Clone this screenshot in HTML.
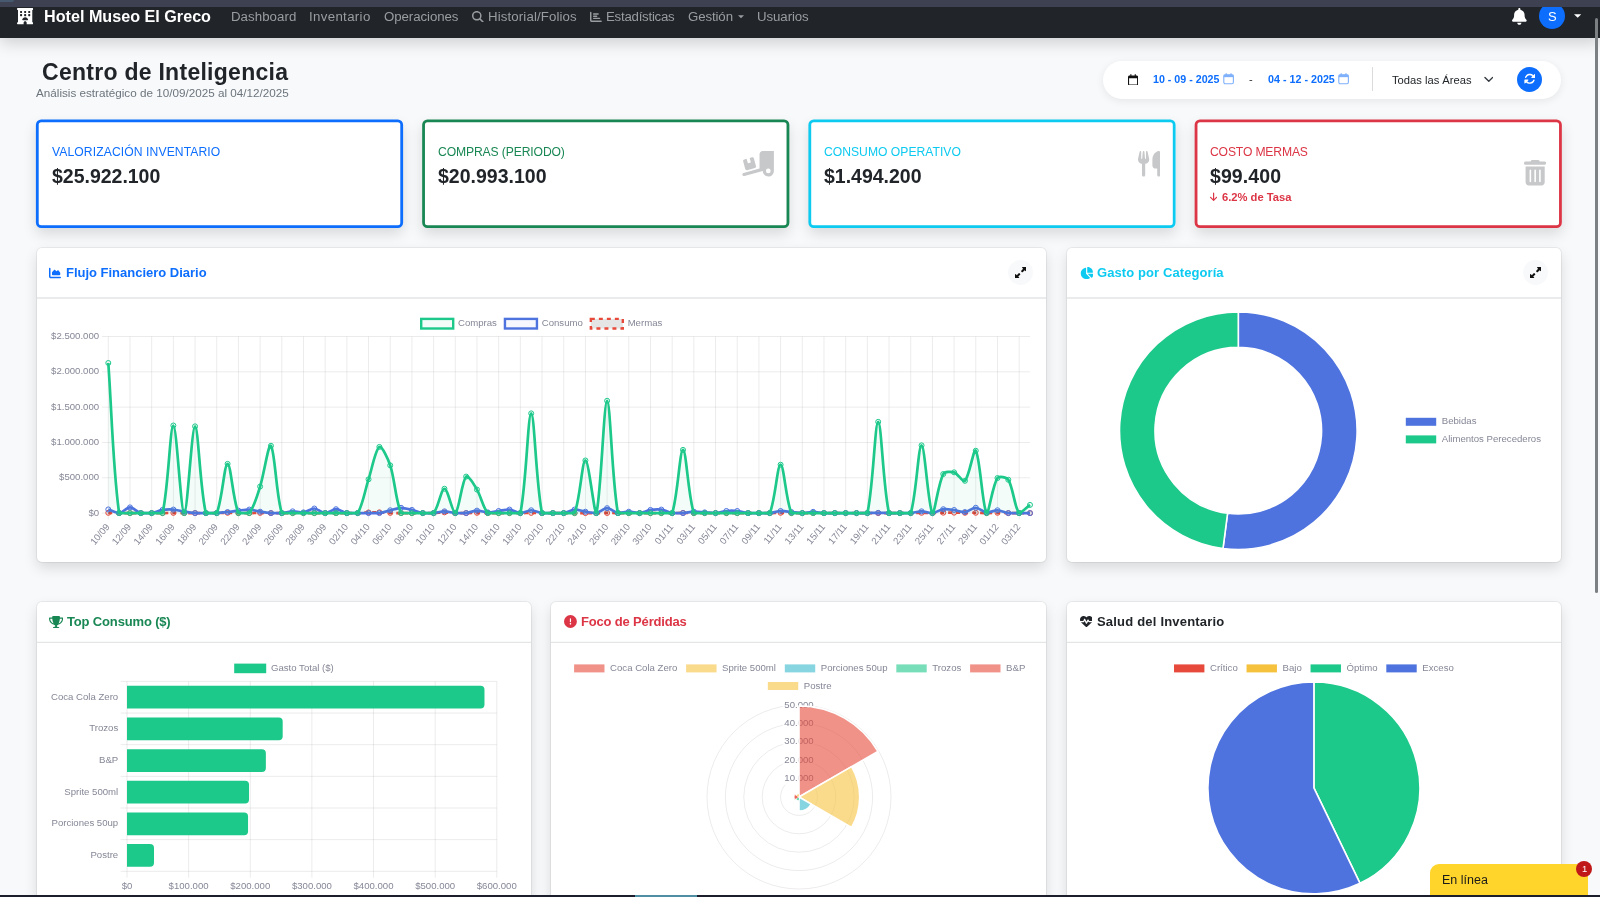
<!DOCTYPE html><html lang="es"><head><meta charset="utf-8"><title>Centro de Inteligencia</title><style>
*{box-sizing:border-box;margin:0;padding:0}
html,body{width:1600px;height:897px;overflow:hidden;background:#f8f9fa;font-family:"Liberation Sans",sans-serif;}
body{position:relative}
#app{position:absolute;left:0;top:0;width:1600px;height:897px;overflow:hidden}
.t{position:absolute;white-space:nowrap;line-height:1;will-change:transform}
.gs{will-change:transform}
.abs{position:absolute}
.nav{position:absolute;left:0;top:0;width:1600px;height:37.6px;background:#212529;box-shadow:0 5px 16px rgba(0,0,0,.17);}
.strip{position:absolute;left:0;top:0;width:1600px;height:6.8px;background:#3d4152;}
.card{position:absolute;background:#fff;border-radius:5px;box-shadow:0 0 0 1px rgba(0,0,0,.055),0 6px 14px rgba(0,0,0,.13);}
.kpi{position:absolute;background:#fff;border-radius:5px;box-shadow:0 6px 14px rgba(0,0,0,.13);top:119.6px;height:108.4px;width:367px;}
.hdr{position:absolute;left:0;right:0;top:0;}
svg text{font-family:"Liberation Sans",sans-serif;font-size:9.6px;fill:#858796;}
.pill{position:absolute;left:1102.5px;top:61px;width:458.5px;height:37.5px;border-radius:19px;background:#fff;box-shadow:0 2px 8px rgba(0,0,0,.08);}
.circ{position:absolute;border-radius:50%;}
</style></head><body><div id="app">
<nav class="nav">
<svg style="position:absolute;left:16.80px;top:8.30px;width:16.30px;height:16.30px;" viewBox="0 0 512 512"><path fill="#fff" d="M0 32C0 14.3 14.3 0 32 0H480c17.7 0 32 14.3 32 32s-14.3 32-32 32V448c17.7 0 32 14.3 32 32s-14.3 32-32 32H304V464c0-26.500-21.500-48-48-48s-48 21.500-48 48v48H32c-17.700 0-32-14.300-32-32s14.300-32 32-32V64C14.300 64 0 49.700 0 32zm96 80v32c0 8.800 7.200 16 16 16h32c8.800 0 16-7.200 16-16V112c0-8.800-7.200-16-16-16H112c-8.800 0-16 7.200-16 16zM240 96c-8.800 0-16 7.200-16 16v32c0 8.800 7.200 16 16 16h32c8.800 0 16-7.200 16-16V112c0-8.800-7.200-16-16-16H240zm112 16v32c0 8.800 7.200 16 16 16h32c8.800 0 16-7.200 16-16V112c0-8.800-7.200-16-16-16H368c-8.800 0-16 7.200-16 16zM112 192c-8.800 0-16 7.200-16 16v32c0 8.800 7.200 16 16 16h32c8.800 0 16-7.200 16-16V208c0-8.800-7.200-16-16-16H112zm112 16v32c0 8.800 7.200 16 16 16h32c8.800 0 16-7.200 16-16V208c0-8.800-7.200-16-16-16H240c-8.800 0-16 7.200-16 16zm144-16c-8.800 0-16 7.200-16 16v32c0 8.800 7.200 16 16 16h32c8.800 0 16-7.200 16-16V208c0-8.800-7.200-16-16-16H368zM328 384c13.300 0 24.300-10.900 21-23.800c-10.600-41.500-48.200-72.200-93-72.200s-82.500 30.700-93 72.200c-3.300 12.800 7.800 23.800 21 23.800H328z"/></svg>
<span class="t" style="left:44.00px;top:8px;font-size:16.16px;font-weight:700;color:#fff;">Hotel Museo El Greco</span>
<span class="t" style="left:230.50px;top:10px;font-size:13.25px;color:#9a9da0;letter-spacing:0.054px;">Dashboard</span>
<span class="t" style="left:309.25px;top:10px;font-size:13.25px;color:#9a9da0;letter-spacing:0.340px;">Inventario</span>
<span class="t" style="left:383.75px;top:10px;font-size:13.25px;color:#9a9da0;letter-spacing:-0.063px;">Operaciones</span>
<span class="t" style="left:488.00px;top:10px;font-size:13.25px;color:#9a9da0;letter-spacing:0.124px;">Historial/Folios</span>
<span class="t" style="left:606.25px;top:10px;font-size:13.25px;color:#9a9da0;letter-spacing:-0.244px;">Estadísticas</span>
<span class="t" style="left:688.25px;top:10px;font-size:13.25px;color:#9a9da0;letter-spacing:-0.111px;">Gestión</span>
<span class="t" style="left:757.00px;top:10px;font-size:13.25px;color:#9a9da0;letter-spacing:-0.076px;">Usuarios</span>
<svg style="position:absolute;left:472.00px;top:10.60px;width:11.80px;height:11.80px;" viewBox="0 0 512 512"><path fill="#9a9da0" d="M416 208c0 45.900-14.900 88.300-40 122.700L502.600 457.400c12.500 12.500 12.500 32.800 0 45.300s-32.800 12.500-45.300 0L330.700 376c-34.400 25.200-76.800 40-122.700 40C93.100 416 0 322.900 0 208S93.100 0 208 0S416 93.100 416 208zM208 352a144 144 0 1 0 0-288 144 144 0 1 0 0 288z"/></svg>
<svg style="position:absolute;left:589.80px;top:10.60px;width:11.80px;height:11.80px;" viewBox="0 0 512 512"><path fill="#9a9da0" d="M32 32c17.700 0 32 14.300 32 32V400c0 8.800 7.200 16 16 16H480c17.700 0 32 14.300 32 32s-14.300 32-32 32H80c-44.200 0-80-35.800-80-80V64C0 46.300 14.300 32 32 32zm96 96c0-17.700 14.300-32 32-32l192 0c17.700 0 32 14.300 32 32s-14.300 32-32 32l-192 0c-17.700 0-32-14.300-32-32zm32 64H288c17.700 0 32 14.300 32 32s-14.300 32-32 32H160c-17.700 0-32-14.300-32-32s14.300-32 32-32zm0 96H416c17.700 0 32 14.300 32 32s-14.300 32-32 32H160c-17.700 0-32-14.300-32-32s14.300-32 32-32z"/></svg>
<svg class="abs" style="left:738px;top:15.2px;width:6px;height:3.4px" viewBox="0 0 10 5"><path d="M0 0h10L5 5z" fill="#9a9da0"/></svg>
<svg style="position:absolute;left:1512.30px;top:8.10px;width:14.70px;height:16.80px;" viewBox="0 0 448 512"><path fill="#fff" d="M224 0c-17.700 0-32 14.300-32 32V51.200C119 66 64 130.600 64 208v18.800c0 47-17.300 92.400-48.500 127.600l-7.400 8.300c-8.400 9.400-10.400 22.900-5.300 34.400S19.400 416 32 416H416c12.600 0 24-7.400 29.200-18.900s3.100-25-5.300-34.400l-7.400-8.300C401.300 319.200 384 273.900 384 226.800V208c0-77.400-55-142-128-156.800V32c0-17.700-14.300-32-32-32zm45.300 493.300c12-12 18.700-28.300 18.700-45.300H224 160c0 17 6.700 33.300 18.700 45.300s28.300 18.700 45.300 18.700s33.300-6.700 45.300-18.700z"/></svg>
<div class="circ" style="left:1538.8px;top:3.1px;width:26.2px;height:26.2px;background:#0d6efd"></div>
<span class="t" style="left:1547.60px;top:10px;font-size:13px;color:#fff;">S</span>
<svg class="abs" style="left:1574px;top:14px;width:7.4px;height:4px" viewBox="0 0 10 5"><path d="M0 0h10L5 5z" fill="#fff"/></svg>
</nav>
<div class="strip"></div>
<div class="abs" style="left:-4px;top:-2px;width:18px;height:4px;border-radius:2px;background:#46596f"></div>
<span class="t" style="left:42.00px;top:61px;font-size:23px;font-weight:700;color:#212529;letter-spacing:0.273px;">Centro de Inteligencia</span>
<span class="t" style="left:36.00px;top:87px;font-size:11.7px;color:#6c757d;">Análisis estratégico de 10/09/2025 al 04/12/2025</span>
<div class="pill"></div>
<svg style="position:absolute;left:1128.00px;top:73.60px;width:10.15px;height:11.60px;" viewBox="0 0 448 512"><path fill="#111" d="M152 24c0-13.300-10.700-24-24-24s-24 10.700-24 24V64H64C28.700 64 0 92.700 0 128v16 48V448c0 35.300 28.700 64 64 64H384c35.300 0 64-28.700 64-64V192 144 128c0-35.300-28.700-64-64-64H344V24c0-13.300-10.700-24-24-24s-24 10.700-24 24V64H152V24zM48 192H400V448c0 8.800-7.200 16-16 16H64c-8.800 0-16-7.200-16-16V192z"/></svg>
<span class="t" style="left:1152.50px;top:74px;font-size:10.68px;font-weight:700;color:#0d6efd;">10 - 09 - 2025</span>
<span class="t" style="left:1267.50px;top:74px;font-size:10.74px;font-weight:700;color:#0d6efd;">04 - 12 - 2025</span>
<span class="t" style="left:1249.30px;top:74px;font-size:11px;color:#333;">-</span>
<svg class="abs" style="left:1223.3px;top:73.2px;width:11.2px;height:11.6px" viewBox="0 0 14 14.5"><rect x="1" y="2.2" width="12" height="11.3" rx="1.8" fill="none" stroke="#7fb0fb" stroke-width="1.4"/><rect x="1" y="2.2" width="12" height="3" fill="#7fb0fb"/><path d="M4 0.3v3M10 0.3v3" stroke="#7fb0fb" stroke-width="1.5"/></svg>
<svg class="abs" style="left:1338.3px;top:73.2px;width:11.2px;height:11.6px" viewBox="0 0 14 14.5"><rect x="1" y="2.2" width="12" height="11.3" rx="1.8" fill="none" stroke="#7fb0fb" stroke-width="1.4"/><rect x="1" y="2.2" width="12" height="3" fill="#7fb0fb"/><path d="M4 0.3v3M10 0.3v3" stroke="#7fb0fb" stroke-width="1.5"/></svg>
<div class="abs" style="left:1372px;top:67.2px;width:1px;height:23.4px;background:#d9dbdd"></div>
<span class="t" style="left:1391.60px;top:75px;font-size:11.19px;color:#212529;">Todas las Áreas</span>
<svg class="abs" style="left:1483.6px;top:75.6px;width:9.6px;height:7px" viewBox="0 0 12 8"><path d="M1.2 1.5l4.8 4.8 4.8-4.8" fill="none" stroke="#343a40" stroke-width="1.7" stroke-linecap="round" stroke-linejoin="round"/></svg>
<div class="circ" style="left:1517.2px;top:66.6px;width:25px;height:25px;background:#0d6efd"></div>
<svg style="position:absolute;left:1523.90px;top:73.30px;width:11.60px;height:11.60px;" viewBox="0 0 512 512"><path fill="#fff" d="M142.900 142.900c62.200-62.200 162.700-62.500 225.300-1L327 183c-6.900 6.900-8.900 17.200-5.200 26.200s12.500 14.800 22.200 14.800H463.500c0 0 0 0 0 0H472c13.300 0 24-10.700 24-24V72c0-9.700-5.800-18.500-14.800-22.200s-19.300-1.700-26.200 5.200L413.400 96.600c-87.600-86.500-228.700-86.200-315.800 1C73.200 122 55.600 150.700 44.800 181.400c-5.900 16.700 2.900 34.900 19.500 40.800s34.900-2.900 40.800-19.500c7.700-21.800 20.200-42.300 37.800-59.800zM16 312v7.600 .7V440c0 9.700 5.800 18.500 14.800 22.200s19.300 1.700 26.200-5.200l41.600-41.600c87.600 86.500 228.700 86.200 315.800-1c24.400-24.400 42.100-53.100 52.900-83.700c5.900-16.700-2.900-34.900-19.500-40.800s-34.900 2.900-40.800 19.500c-7.700 21.800-20.200 42.300-37.800 59.800c-62.200 62.200-162.700 62.500-225.300 1L185 329c6.900-6.900 8.900-17.200 5.200-26.200s-12.500-14.800-22.200-14.800H48.400h-.7H40c-13.300 0-24 10.700-24 24z"/></svg>
<div class="kpi" style="left:36px"></div>
<span class="t" style="left:51.70px;top:146px;font-size:12.15px;color:#0d6efd;letter-spacing:0.096px;">VALORIZACIÓN INVENTARIO</span>
<span class="t" style="left:51.70px;top:167px;font-size:19.5px;font-weight:700;color:#212529;letter-spacing:-0.014px;">$25.922.100</span>
<div class="kpi" style="left:422.25px"></div>
<span class="t" style="left:437.95px;top:146px;font-size:12.15px;color:#198754;letter-spacing:-0.121px;">COMPRAS (PERIODO)</span>
<span class="t" style="left:437.95px;top:167px;font-size:19.5px;font-weight:700;color:#212529;letter-spacing:0.006px;">$20.993.100</span>
<div class="kpi" style="left:808.5px"></div>
<span class="t" style="left:824.20px;top:146px;font-size:12.15px;color:#0dcaf0;letter-spacing:0.012px;">CONSUMO OPERATIVO</span>
<span class="t" style="left:824.20px;top:167px;font-size:19.5px;font-weight:700;color:#212529;letter-spacing:-0.011px;">$1.494.200</span>
<div class="kpi" style="left:1194.75px"></div>
<span class="t" style="left:1210.45px;top:146px;font-size:12.15px;color:#dc3545;letter-spacing:-0.153px;">COSTO MERMAS</span>
<span class="t" style="left:1210.45px;top:167px;font-size:19.5px;font-weight:700;color:#212529;letter-spacing:0.085px;">$99.400</span>
<svg style="position:absolute;left:742.20px;top:151.10px;width:31.88px;height:25.50px;" viewBox="0 0 640 512"><path fill="#c7c8ca" d="M640 0V400c0 61.900-50.100 112-112 112c-61 0-110.500-48.700-112-109.300L48.400 502.900c-17.100 4.600-34.600-5.400-39.300-22.500s5.400-34.600 22.500-39.300L352 353.800V64c0-35.300 28.700-64 64-64H640zM576 400a48 48 0 1 0 -96 0 48 48 0 1 0 96 0zM23.100 207.700c-4.600-17.100 5.600-34.600 22.600-39.200l46.400-12.400 20.700 77.300c2.300 8.500 11.100 13.600 19.600 11.300l30.900-8.300c8.500-2.300 13.600-11.100 11.300-19.600l-20.700-77.300 46.400-12.400c17.100-4.600 34.600 5.600 39.200 22.600l41.400 154.500c4.600 17.100-5.600 34.600-22.600 39.200L103.700 384.900c-17.100 4.600-34.600-5.600-39.200-22.600L23.100 207.700z"/></svg>
<svg style="position:absolute;left:1137.70px;top:151.10px;width:22.40px;height:25.60px;" viewBox="0 0 448 512"><path fill="#c7c8ca" d="M416 0C400 0 288 32 288 176V288c0 35.300 28.700 64 64 64h32V480c0 17.700 14.300 32 32 32s32-14.300 32-32V352 240 32c0-17.700-14.300-32-32-32zM64 16C64 7.800 57.900 1 49.700 .1S34.200 4.600 32.400 12.500L2.100 148.800C.7 155.100 0 161.500 0 167.900c0 45.900 35.100 83.600 80 87.700V480c0 17.700 14.300 32 32 32s32-14.300 32-32V255.600c44.900-4.100 80-41.800 80-87.700c0-6.400-.7-12.800-2.100-19.100L191.600 12.500c-1.800-8-9.300-13.300-17.400-12.400S160 7.800 160 16V150.200c0 5.400-4.400 9.800-9.800 9.800c-5.100 0-9.300-3.900-9.800-9L127.900 14.600C127.200 6.300 120.300 0 112 0s-15.200 6.300-15.900 14.600L83.700 151c-.5 5.100-4.700 9-9.800 9c-5.400 0-9.800-4.400-9.800-9.800V16z"/></svg>
<svg style="position:absolute;left:1523.80px;top:160.30px;width:22.31px;height:25.50px;" viewBox="0 0 448 512"><path fill="#c7c8ca" d="M135.200 17.700C140.600 6.800 151.700 0 163.800 0H284.200c12.100 0 23.200 6.800 28.600 17.700L320 32h96c17.700 0 32 14.300 32 32s-14.300 32-32 32H32C14.300 96 0 81.700 0 64S14.300 32 32 32h96l7.200-14.300zM32 128H416V448c0 35.300-28.700 64-64 64H96c-35.300 0-64-28.700-64-64V128zm96 64c-8.800 0-16 7.200-16 16V432c0 8.800 7.200 16 16 16s16-7.200 16-16V208c0-8.800-7.200-16-16-16zm96 0c-8.800 0-16 7.200-16 16V432c0 8.800 7.200 16 16 16s16-7.200 16-16V208c0-8.800-7.200-16-16-16zm96 0c-8.800 0-16 7.200-16 16V432c0 8.800 7.200 16 16 16s16-7.200 16-16V208c0-8.800-7.200-16-16-16z"/></svg>
<svg style="position:absolute;left:1210.30px;top:192.20px;width:7.20px;height:9.60px;" viewBox="0 0 384 512"><path fill="#dc3545" d="M169.400 470.600c12.500 12.500 32.800 12.500 45.300 0l160-160c12.500-12.500 12.500-32.800 0-45.300s-32.800-12.500-45.300 0L224 370.800 224 64c0-17.700-14.300-32-32-32s-32 14.300-32 32l0 306.700L54.600 265.400c-12.500-12.500-32.800-12.500-45.300 0s-12.500 32.800 0 45.300l160 160z"/></svg>
<span class="t" style="left:1221.50px;top:192px;font-size:11.2px;font-weight:700;color:#dc3545;">6.2% de Tasa</span>
<div class="card" style="left:37px;top:248px;width:1009px;height:314px"><div class="hdr" style="height:50px"></div></div>
<div class="card" style="left:1067px;top:248px;width:494px;height:314px"><div class="hdr" style="height:50px"></div></div>
<div class="card" style="left:37px;top:602px;width:494px;height:320px"><div class="hdr" style="height:41px"></div></div>
<div class="card" style="left:551px;top:602px;width:495px;height:320px"><div class="hdr" style="height:41px"></div></div>
<div class="card" style="left:1067px;top:602px;width:494px;height:320px"><div class="hdr" style="height:41px"></div></div>
<svg style="position:absolute;left:49.10px;top:267.00px;width:12.00px;height:12.00px;" viewBox="0 0 512 512"><path fill="#0d6efd" d="M64 64c0-17.700-14.300-32-32-32S0 46.300 0 64V400c0 44.200 35.800 80 80 80H480c17.700 0 32-14.300 32-32s-14.300-32-32-32H80c-8.800 0-16-7.200-16-16V64zm96 288H448c17.700 0 32-14.300 32-32V251.800c0-7.600-2.700-15-7.700-20.800l-65.800-76.800c-12.100-14.200-33.700-15-46.900-1.800l-21 21c-10 10-26.400 9.200-35.400-1.600l-39.200-47c-12.600-15.100-35.700-15.400-48.700-.6L135.900 215c-5.100 5.800-7.900 13.300-7.900 21.100v84c0 17.700 14.300 32 32 32z"/></svg>
<span class="t" style="left:66.00px;top:266px;font-size:13px;font-weight:700;color:#0d6efd;letter-spacing:-0.011px;">Flujo Financiero Diario</span>
<svg style="position:absolute;left:1079.70px;top:266.80px;width:13.72px;height:12.20px;" viewBox="0 0 576 512"><path fill="#0dcaf0" d="M304 240V16.600c0-9 7-16.600 16-16.600C443.700 0 544 100.300 544 224c0 9-7.600 16-16.600 16H304zM32 272C32 150.700 122.100 50.300 239 34.300c9.200-1.300 17 6.100 17 15.400V288L412.500 444.500c6.700 6.700 6.200 17.700-1.500 23.100C371.800 495.600 323.800 512 272 512C139.500 512 32 404.600 32 272zm526.400 16c9.300 0 16.600 7.800 15.400 17c-7.700 55.900-34.600 105.600-73.900 142.300c-6 5.600-15.400 5.200-21.200-.7L320 288H558.400z"/></svg>
<span class="t" style="left:1097.10px;top:266px;font-size:13px;font-weight:700;color:#0dcaf0;letter-spacing:0.091px;">Gasto por Categoría</span>
<svg style="position:absolute;left:49.10px;top:615.60px;width:14.17px;height:12.60px;" viewBox="0 0 576 512"><path fill="#198754" d="M400 0H176c-26.500 0-48.100 21.800-47.100 48.200c.2 5.300 .4 10.600 .7 15.800H24C10.700 64 0 74.700 0 88c0 92.600 33.500 157 78.500 200.700c44.300 43.100 98.300 64.800 138.100 75.800c23.400 6.500 39.400 26 39.400 45.600c0 20.900-17 37.900-37.900 37.900H192c-17.700 0-32 14.300-32 32s14.300 32 32 32H384c17.700 0 32-14.300 32-32s-14.300-32-32-32H357.900C337 448 320 431 320 410.100c0-19.600 15.900-39.200 39.400-45.600c39.900-11 93.900-32.700 138.200-75.800C542.500 245 576 180.600 576 88c0-13.300-10.700-24-24-24H446.400c.3-5.200 .5-10.400 .7-15.800C448.100 21.800 426.500 0 400 0zM48.900 112h84.400c9.100 90.100 29.200 150.300 51.900 190.600c-24.900-11-50.800-26.500-73.200-48.300c-32-31.100-58-76-63-142.300zM464.100 254.300c-22.400 21.800-48.300 37.300-73.200 48.300c22.700-40.300 42.800-100.500 51.900-190.600h84.400c-5.100 66.300-31.100 111.200-63 142.300z"/></svg>
<span class="t" style="left:67.20px;top:615px;font-size:13px;font-weight:700;color:#198754;letter-spacing:-0.158px;">Top Consumo ($)</span>
<svg style="position:absolute;left:564.00px;top:615.40px;width:12.90px;height:12.90px;" viewBox="0 0 512 512"><path fill="#dc3545" d="M256 512A256 256 0 1 0 256 0a256 256 0 1 0 0 512zm0-384c13.300 0 24 10.700 24 24V264c0 13.300-10.700 24-24 24s-24-10.700-24-24V152c0-13.300 10.700-24 24-24zM224 352a32 32 0 1 1 64 0 32 32 0 1 1 -64 0z"/></svg>
<span class="t" style="left:580.70px;top:615px;font-size:13px;font-weight:700;color:#dc3545;letter-spacing:-0.171px;">Foco de Pérdidas</span>
<svg style="position:absolute;left:1079.50px;top:615.40px;width:12.90px;height:12.90px;" viewBox="0 0 512 512"><path fill="#212529" d="M228.300 469.100L47.600 300.400c-4.200-3.900-8.200-8.100-11.900-12.400h87c22.600 0 43-13.600 51.700-34.500l10.500-25.200 49.300 109.500c3.800 8.500 12.100 14 21.400 14.100s17.800-5 22-13.300L320 253.700l1.700 3.400c9.500 19 28.900 31 50.100 31H476.300c-3.700 4.300-7.700 8.500-11.900 12.400L283.700 469.100c-7.500 7-17.400 10.900-27.700 10.900s-20.200-3.900-27.700-10.900zM503.700 240h-132c-3 0-5.800-1.700-7.200-4.400l-23.200-46.300c-4.100-8.100-12.400-13.300-21.500-13.300s-17.400 5.100-21.500 13.300l-41.400 82.800L205.900 158.200c-3.900-8.700-12.700-14.300-22.200-14.100s-18.100 5.900-21.800 14.800l-31.800 76.300c-1.200 3-4.200 4.900-7.400 4.900H16c-2.600 0-5 .4-7.300 1.100C3 225.200 0 208.200 0 190.900v-5.800c0-69.900 50.500-129.500 119.400-141C165 36.500 211.400 51.400 244 84l12 12 12-12c32.600-32.600 79-47.500 124.600-39.900C461.500 55.600 512 115.200 512 185.100v5.800c0 16.900-2.800 33.500-8.300 49.100z"/></svg>
<span class="t" style="left:1097.00px;top:615px;font-size:13px;font-weight:700;color:#212529;letter-spacing:0.199px;">Salud del Inventario</span>
<div class="circ" style="left:1008.3px;top:260.0px;width:25px;height:25px;background:#f8f9fa"></div>
<svg style="position:absolute;left:1015.10px;top:266.80px;width:11.40px;height:11.40px;" viewBox="0 0 512 512"><path fill="#111" d="M344 0H488c13.300 0 24 10.700 24 24V168c0 9.700-5.800 18.500-14.800 22.200s-19.300 1.700-26.200-5.200l-39-39-87 87c-9.400 9.400-24.600 9.400-33.900 0l-32-32c-9.400-9.400-9.400-24.600 0-33.900l87-87L327 41c-6.900-6.900-8.900-17.200-5.200-26.200S334.300 0 344 0zM168 512H24c-13.300 0-24-10.700-24-24V344c0-9.700 5.800-18.500 14.800-22.200s19.300-1.700 26.200 5.200l39 39 87-87c9.400-9.400 24.600-9.400 33.900 0l32 32c9.400 9.400 9.400 24.600 0 33.900l-87 87 39 39c6.900 6.900 8.900 17.200 5.200 26.200s-12.500 14.800-22.200 14.800z"/></svg>
<div class="circ" style="left:1523.1px;top:260.0px;width:25px;height:25px;background:#f8f9fa"></div>
<svg style="position:absolute;left:1529.90px;top:266.80px;width:11.40px;height:11.40px;" viewBox="0 0 512 512"><path fill="#111" d="M344 0H488c13.300 0 24 10.700 24 24V168c0 9.700-5.800 18.500-14.800 22.200s-19.300 1.700-26.200-5.200l-39-39-87 87c-9.400 9.400-24.600 9.400-33.900 0l-32-32c-9.400-9.400-9.400-24.600 0-33.900l87-87L327 41c-6.900-6.900-8.900-17.200-5.200-26.200S334.300 0 344 0zM168 512H24c-13.300 0-24-10.700-24-24V344c0-9.700 5.800-18.500 14.800-22.200s19.300-1.700 26.200 5.200l39 39 87-87c9.400-9.400 24.600-9.400 33.900 0l32 32c9.400 9.400 9.400 24.600 0 33.900l-87 87 39 39c6.900 6.900 8.900 17.200 5.200 26.200s-12.500 14.800-22.200 14.800z"/></svg>
<svg class="abs gs" style="left:0;top:0" width="1600" height="897" viewBox="0 0 1600 897">
<defs><clipPath id="lcclip"><rect x="104" y="332" width="931" height="186"/></clipPath></defs>
<rect x="37.30" y="120.90" width="364.40" height="105.80" rx="3.9" fill="none" stroke="#0d6efd" stroke-width="2.8"/><rect x="423.55" y="120.90" width="364.40" height="105.80" rx="3.9" fill="none" stroke="#198754" stroke-width="2.8"/><rect x="809.80" y="120.90" width="364.40" height="105.80" rx="3.9" fill="none" stroke="#0dcaf0" stroke-width="2.8"/><rect x="1196.05" y="120.90" width="364.40" height="105.80" rx="3.9" fill="none" stroke="#dc3545" stroke-width="2.8"/>
<path d="M37 298H1046M1067 298H1561M37 642.4H531M551 642.4H1046M1067 642.4H1561" stroke="#e4e5e6" stroke-width="1.3" fill="none"/>
<path d="M101.9 336.5H1030M101.9 371.82H1030M101.9 407.14H1030M101.9 442.46H1030M101.9 477.78H1030M101.9 513.1H1030M108.3 336.5V519.5M129.99 336.5V519.5M151.67 336.5V519.5M173.36 336.5V519.5M195.05 336.5V519.5M216.74 336.5V519.5M238.42 336.5V519.5M260.11 336.5V519.5M281.8 336.5V519.5M303.48 336.5V519.5M325.17 336.5V519.5M346.86 336.5V519.5M368.54 336.5V519.5M390.23 336.5V519.5M411.92 336.5V519.5M433.61 336.5V519.5M455.29 336.5V519.5M476.98 336.5V519.5M498.67 336.5V519.5M520.35 336.5V519.5M542.04 336.5V519.5M563.73 336.5V519.5M585.42 336.5V519.5M607.1 336.5V519.5M628.79 336.5V519.5M650.48 336.5V519.5M672.16 336.5V519.5M693.85 336.5V519.5M715.54 336.5V519.5M737.22 336.5V519.5M758.91 336.5V519.5M780.6 336.5V519.5M802.29 336.5V519.5M823.97 336.5V519.5M845.66 336.5V519.5M867.35 336.5V519.5M889.03 336.5V519.5M910.72 336.5V519.5M932.41 336.5V519.5M954.1 336.5V519.5M975.78 336.5V519.5M997.47 336.5V519.5M1019.16 336.5V519.5" stroke="rgba(0,0,0,0.1)" stroke-width="0.8" fill="none"/>
<text x="99.1" y="515.5" text-anchor="end">$0</text>
<text x="99.1" y="480.18" text-anchor="end">$500.000</text>
<text x="99.1" y="444.86" text-anchor="end">$1.000.000</text>
<text x="99.1" y="409.54" text-anchor="end">$1.500.000</text>
<text x="99.1" y="374.22" text-anchor="end">$2.000.000</text>
<text x="99.1" y="338.9" text-anchor="end">$2.500.000</text>
<text transform="translate(103.89 521.9) rotate(-50)" text-anchor="end" x="0" y="8.1">10/09</text>
<text transform="translate(125.58 521.9) rotate(-50)" text-anchor="end" x="0" y="8.1">12/09</text>
<text transform="translate(147.26 521.9) rotate(-50)" text-anchor="end" x="0" y="8.1">14/09</text>
<text transform="translate(168.95 521.9) rotate(-50)" text-anchor="end" x="0" y="8.1">16/09</text>
<text transform="translate(190.64 521.9) rotate(-50)" text-anchor="end" x="0" y="8.1">18/09</text>
<text transform="translate(212.33 521.9) rotate(-50)" text-anchor="end" x="0" y="8.1">20/09</text>
<text transform="translate(234.01 521.9) rotate(-50)" text-anchor="end" x="0" y="8.1">22/09</text>
<text transform="translate(255.7 521.9) rotate(-50)" text-anchor="end" x="0" y="8.1">24/09</text>
<text transform="translate(277.39 521.9) rotate(-50)" text-anchor="end" x="0" y="8.1">26/09</text>
<text transform="translate(299.07 521.9) rotate(-50)" text-anchor="end" x="0" y="8.1">28/09</text>
<text transform="translate(320.76 521.9) rotate(-50)" text-anchor="end" x="0" y="8.1">30/09</text>
<text transform="translate(342.45 521.9) rotate(-50)" text-anchor="end" x="0" y="8.1">02/10</text>
<text transform="translate(364.13 521.9) rotate(-50)" text-anchor="end" x="0" y="8.1">04/10</text>
<text transform="translate(385.82 521.9) rotate(-50)" text-anchor="end" x="0" y="8.1">06/10</text>
<text transform="translate(407.51 521.9) rotate(-50)" text-anchor="end" x="0" y="8.1">08/10</text>
<text transform="translate(429.2 521.9) rotate(-50)" text-anchor="end" x="0" y="8.1">10/10</text>
<text transform="translate(450.88 521.9) rotate(-50)" text-anchor="end" x="0" y="8.1">12/10</text>
<text transform="translate(472.57 521.9) rotate(-50)" text-anchor="end" x="0" y="8.1">14/10</text>
<text transform="translate(494.26 521.9) rotate(-50)" text-anchor="end" x="0" y="8.1">16/10</text>
<text transform="translate(515.94 521.9) rotate(-50)" text-anchor="end" x="0" y="8.1">18/10</text>
<text transform="translate(537.63 521.9) rotate(-50)" text-anchor="end" x="0" y="8.1">20/10</text>
<text transform="translate(559.32 521.9) rotate(-50)" text-anchor="end" x="0" y="8.1">22/10</text>
<text transform="translate(581.01 521.9) rotate(-50)" text-anchor="end" x="0" y="8.1">24/10</text>
<text transform="translate(602.69 521.9) rotate(-50)" text-anchor="end" x="0" y="8.1">26/10</text>
<text transform="translate(624.38 521.9) rotate(-50)" text-anchor="end" x="0" y="8.1">28/10</text>
<text transform="translate(646.07 521.9) rotate(-50)" text-anchor="end" x="0" y="8.1">30/10</text>
<text transform="translate(667.75 521.9) rotate(-50)" text-anchor="end" x="0" y="8.1">01/11</text>
<text transform="translate(689.44 521.9) rotate(-50)" text-anchor="end" x="0" y="8.1">03/11</text>
<text transform="translate(711.13 521.9) rotate(-50)" text-anchor="end" x="0" y="8.1">05/11</text>
<text transform="translate(732.81 521.9) rotate(-50)" text-anchor="end" x="0" y="8.1">07/11</text>
<text transform="translate(754.5 521.9) rotate(-50)" text-anchor="end" x="0" y="8.1">09/11</text>
<text transform="translate(776.19 521.9) rotate(-50)" text-anchor="end" x="0" y="8.1">11/11</text>
<text transform="translate(797.88 521.9) rotate(-50)" text-anchor="end" x="0" y="8.1">13/11</text>
<text transform="translate(819.56 521.9) rotate(-50)" text-anchor="end" x="0" y="8.1">15/11</text>
<text transform="translate(841.25 521.9) rotate(-50)" text-anchor="end" x="0" y="8.1">17/11</text>
<text transform="translate(862.94 521.9) rotate(-50)" text-anchor="end" x="0" y="8.1">19/11</text>
<text transform="translate(884.62 521.9) rotate(-50)" text-anchor="end" x="0" y="8.1">21/11</text>
<text transform="translate(906.31 521.9) rotate(-50)" text-anchor="end" x="0" y="8.1">23/11</text>
<text transform="translate(928 521.9) rotate(-50)" text-anchor="end" x="0" y="8.1">25/11</text>
<text transform="translate(949.69 521.9) rotate(-50)" text-anchor="end" x="0" y="8.1">27/11</text>
<text transform="translate(971.37 521.9) rotate(-50)" text-anchor="end" x="0" y="8.1">29/11</text>
<text transform="translate(993.06 521.9) rotate(-50)" text-anchor="end" x="0" y="8.1">01/12</text>
<text transform="translate(1014.75 521.9) rotate(-50)" text-anchor="end" x="0" y="8.1">03/12</text>
<g clip-path="url(#lcclip)">
<path d="M108.3 512.82C111.55 512.9 115.89 513.06 119.14 513.1C122.4 513.1 126.73 513.1 129.99 513.1C133.24 513.1 137.58 513.1 140.83 513.1C144.08 513.1 148.42 513.1 151.67 513.1C154.93 513.1 159.26 513.1 162.52 513.1C165.77 513.07 170.11 512.89 173.36 512.89C176.61 512.89 180.95 513.07 184.2 513.1C187.46 513.1 191.8 513.1 195.05 513.1C198.3 513.1 202.64 513.1 205.89 513.1C209.14 513.1 213.48 513.1 216.74 513.1C219.99 513.06 224.33 512.82 227.58 512.82C230.83 512.82 235.17 513.06 238.42 513.1C241.67 513.1 246.01 513.1 249.27 513.1C252.52 513.07 256.86 512.89 260.11 512.89C263.36 512.89 267.7 513.07 270.95 513.1C274.21 513.1 278.54 513.1 281.8 513.1C285.05 513.1 289.39 513.1 292.64 513.1C295.89 513.1 300.23 513.1 303.48 513.1C306.74 513.1 311.07 513.1 314.33 513.1C317.58 513.1 321.92 513.1 325.17 513.1C328.42 513.1 332.76 513.1 336.01 513.1C339.27 513.1 343.6 513.1 346.86 513.1C350.11 513.1 354.45 513.1 357.7 513.1C360.96 513 365.29 512.58 368.54 512.46C371.8 512.35 376.14 512.26 379.39 512.32C382.64 512.39 386.98 512.77 390.23 512.89C393.48 513 397.82 513.07 401.08 513.1C404.33 513.1 408.67 513.1 411.92 513.1C415.17 513.1 419.51 513.1 422.76 513.1C426.02 513.1 430.36 513.1 433.61 513.1C436.86 512.99 441.2 512.39 444.45 512.39C447.7 512.39 452.04 512.99 455.29 513.1C458.54 513.1 462.88 513.1 466.14 513.1C469.39 513.06 473.73 512.82 476.98 512.82C480.23 512.82 484.57 513.06 487.82 513.1C491.08 513.1 495.41 513.1 498.67 513.1C501.92 513.1 506.26 513.1 509.51 513.1C512.76 513.1 517.1 513.1 520.35 513.1C523.61 513.07 527.94 512.89 531.2 512.89C534.45 512.89 538.79 513.07 542.04 513.1C545.29 513.1 549.63 513.1 552.88 513.1C556.14 513.1 560.48 513.1 563.73 513.1C566.98 513.1 571.32 513.1 574.57 513.1C577.82 513.1 582.16 513.1 585.42 513.1C588.67 513.1 593.01 513.1 596.26 513.1C599.51 513.08 603.85 512.96 607.1 512.96C610.36 512.96 614.69 513.08 617.95 513.1C621.2 513.1 625.54 513.1 628.79 513.1C632.04 513.1 636.38 513.1 639.63 513.1C642.89 513.1 647.22 513.1 650.48 513.1C653.73 513.1 658.07 513.1 661.32 513.1C664.57 513.1 668.91 513.1 672.16 513.1C675.42 513.07 679.75 512.89 683.01 512.89C686.26 512.89 690.6 513.07 693.85 513.1C697.1 513.1 701.44 513.1 704.69 513.1C707.95 513.1 712.28 513.1 715.54 513.1C718.79 513.1 723.13 513.1 726.38 513.1C729.63 513.1 733.97 513.1 737.22 513.1C740.48 513.1 744.82 513.1 748.07 513.1C751.32 513.1 755.66 513.1 758.91 513.1C762.16 513.1 766.5 513.1 769.76 513.1C773.01 513.06 777.35 512.82 780.6 512.82C783.85 512.82 788.19 513.06 791.44 513.1C794.69 513.1 799.03 513.1 802.29 513.1C805.54 513.1 809.88 513.1 813.13 513.1C816.38 513.1 820.72 513.1 823.97 513.1C827.23 513.1 831.56 513.1 834.82 513.1C838.07 513.1 842.41 513.1 845.66 513.1C848.91 513.1 853.25 513.1 856.5 513.1C859.76 513.1 864.09 513.1 867.35 513.1C870.6 513.1 874.94 513.1 878.19 513.1C881.44 513.1 885.78 513.1 889.03 513.1C892.29 513.1 896.62 513.1 899.88 513.1C903.13 513.1 907.47 513.1 910.72 513.1C913.97 513.06 918.31 512.82 921.56 512.82C924.82 512.82 929.16 513.1 932.41 513.1C935.66 513.08 940 512.74 943.25 512.68C946.5 512.61 950.84 512.65 954.1 512.68C957.35 512.7 961.69 512.81 964.94 512.82C968.19 512.83 972.53 512.7 975.78 512.75C979.04 512.79 983.37 513.09 986.63 513.1C989.88 513.1 994.22 512.82 997.47 512.82C1000.72 512.82 1005.06 513.06 1008.31 513.1C1011.57 513.1 1015.9 513.1 1019.16 513.1C1022.41 513.1 1026.75 513.1 1030 513.1" fill="none" stroke="#e74a3b" stroke-width="2.7" stroke-dasharray="4 4" stroke-linejoin="round"/><g fill="rgba(0,0,0,0.1)" stroke="#e74a3b" stroke-width="1.0"><circle cx="108.3" cy="512.82" r="2.5"/><circle cx="119.14" cy="513.1" r="2.5"/><circle cx="129.99" cy="513.1" r="2.5"/><circle cx="140.83" cy="513.1" r="2.5"/><circle cx="151.67" cy="513.1" r="2.5"/><circle cx="162.52" cy="513.1" r="2.5"/><circle cx="173.36" cy="512.89" r="2.5"/><circle cx="184.2" cy="513.1" r="2.5"/><circle cx="195.05" cy="513.1" r="2.5"/><circle cx="205.89" cy="513.1" r="2.5"/><circle cx="216.74" cy="513.1" r="2.5"/><circle cx="227.58" cy="512.82" r="2.5"/><circle cx="238.42" cy="513.1" r="2.5"/><circle cx="249.27" cy="513.1" r="2.5"/><circle cx="260.11" cy="512.89" r="2.5"/><circle cx="270.95" cy="513.1" r="2.5"/><circle cx="281.8" cy="513.1" r="2.5"/><circle cx="292.64" cy="513.1" r="2.5"/><circle cx="303.48" cy="513.1" r="2.5"/><circle cx="314.33" cy="513.1" r="2.5"/><circle cx="325.17" cy="513.1" r="2.5"/><circle cx="336.01" cy="513.1" r="2.5"/><circle cx="346.86" cy="513.1" r="2.5"/><circle cx="357.7" cy="513.1" r="2.5"/><circle cx="368.54" cy="512.46" r="2.5"/><circle cx="379.39" cy="512.32" r="2.5"/><circle cx="390.23" cy="512.89" r="2.5"/><circle cx="401.08" cy="513.1" r="2.5"/><circle cx="411.92" cy="513.1" r="2.5"/><circle cx="422.76" cy="513.1" r="2.5"/><circle cx="433.61" cy="513.1" r="2.5"/><circle cx="444.45" cy="512.39" r="2.5"/><circle cx="455.29" cy="513.1" r="2.5"/><circle cx="466.14" cy="513.1" r="2.5"/><circle cx="476.98" cy="512.82" r="2.5"/><circle cx="487.82" cy="513.1" r="2.5"/><circle cx="498.67" cy="513.1" r="2.5"/><circle cx="509.51" cy="513.1" r="2.5"/><circle cx="520.35" cy="513.1" r="2.5"/><circle cx="531.2" cy="512.89" r="2.5"/><circle cx="542.04" cy="513.1" r="2.5"/><circle cx="552.88" cy="513.1" r="2.5"/><circle cx="563.73" cy="513.1" r="2.5"/><circle cx="574.57" cy="513.1" r="2.5"/><circle cx="585.42" cy="513.1" r="2.5"/><circle cx="596.26" cy="513.1" r="2.5"/><circle cx="607.1" cy="512.96" r="2.5"/><circle cx="617.95" cy="513.1" r="2.5"/><circle cx="628.79" cy="513.1" r="2.5"/><circle cx="639.63" cy="513.1" r="2.5"/><circle cx="650.48" cy="513.1" r="2.5"/><circle cx="661.32" cy="513.1" r="2.5"/><circle cx="672.16" cy="513.1" r="2.5"/><circle cx="683.01" cy="512.89" r="2.5"/><circle cx="693.85" cy="513.1" r="2.5"/><circle cx="704.69" cy="513.1" r="2.5"/><circle cx="715.54" cy="513.1" r="2.5"/><circle cx="726.38" cy="513.1" r="2.5"/><circle cx="737.22" cy="513.1" r="2.5"/><circle cx="748.07" cy="513.1" r="2.5"/><circle cx="758.91" cy="513.1" r="2.5"/><circle cx="769.76" cy="513.1" r="2.5"/><circle cx="780.6" cy="512.82" r="2.5"/><circle cx="791.44" cy="513.1" r="2.5"/><circle cx="802.29" cy="513.1" r="2.5"/><circle cx="813.13" cy="513.1" r="2.5"/><circle cx="823.97" cy="513.1" r="2.5"/><circle cx="834.82" cy="513.1" r="2.5"/><circle cx="845.66" cy="513.1" r="2.5"/><circle cx="856.5" cy="513.1" r="2.5"/><circle cx="867.35" cy="513.1" r="2.5"/><circle cx="878.19" cy="513.1" r="2.5"/><circle cx="889.03" cy="513.1" r="2.5"/><circle cx="899.88" cy="513.1" r="2.5"/><circle cx="910.72" cy="513.1" r="2.5"/><circle cx="921.56" cy="512.82" r="2.5"/><circle cx="932.41" cy="513.1" r="2.5"/><circle cx="943.25" cy="512.68" r="2.5"/><circle cx="954.1" cy="512.68" r="2.5"/><circle cx="964.94" cy="512.82" r="2.5"/><circle cx="975.78" cy="512.75" r="2.5"/><circle cx="986.63" cy="513.1" r="2.5"/><circle cx="997.47" cy="512.82" r="2.5"/><circle cx="1008.31" cy="513.1" r="2.5"/><circle cx="1019.16" cy="513.1" r="2.5"/><circle cx="1030" cy="513.1" r="2.5"/></g>
<path d="M108.3 509.43C111.55 510.53 116 513.1 119.14 513.1C122.51 512.78 126.73 507.38 129.99 507.38C133.24 507.38 137.38 512.19 140.83 513.1C143.88 513.1 148.49 513.1 151.67 513.1C154.99 512.61 159.2 510.46 162.52 509.92C165.7 509.4 170.14 509.31 173.36 509.57C176.64 509.84 180.93 511.15 184.2 511.69C187.44 512.21 191.78 512.89 195.05 513.1C198.29 513.1 202.64 513.1 205.89 513.1C209.14 513.1 213.49 513.1 216.74 513.1C220 512.94 224.33 512.41 227.58 512.04C230.84 511.67 235.16 511 238.42 510.63C241.67 510.26 246.04 509.41 249.27 509.57C252.54 509.73 256.84 511.15 260.11 511.69C263.35 512.21 267.69 512.89 270.95 513.1C274.19 513.1 278.56 513.1 281.8 513.1C285.07 512.83 289.37 511.44 292.64 511.33C295.88 511.23 300.32 512.81 303.48 512.39C306.83 511.96 311.11 508.4 314.33 508.51C317.62 508.62 321.88 512.99 325.17 513.1C328.39 513.1 332.76 509.21 336.01 509.21C339.27 509.21 343.51 512.5 346.86 513.1C350.01 513.1 354.45 513.1 357.7 513.1C360.95 513.1 365.29 513.1 368.54 513.1C371.8 513.1 376.19 513.1 379.39 513.1C382.69 512.67 386.97 511.07 390.23 510.27C393.47 509.48 397.81 507.86 401.08 507.8C404.32 507.75 408.7 509.14 411.92 509.92C415.21 510.72 419.44 512.61 422.76 513.1C425.95 513.1 430.37 513.1 433.61 513.1C436.88 512.83 441.2 511.33 444.45 511.33C447.7 511.33 452.02 512.83 455.29 513.1C458.52 513.1 462.92 513.1 466.14 513.1C469.43 512.72 473.71 510.73 476.98 510.63C480.21 510.52 484.56 512.34 487.82 512.39C491.07 512.45 495.41 511.4 498.67 510.98C501.92 510.56 506.33 509.26 509.51 509.57C512.83 509.89 517.07 512.99 520.35 513.1C523.58 513.1 527.94 510.27 531.2 510.27C534.45 510.27 538.73 512.67 542.04 513.1C545.24 513.1 549.63 513.1 552.88 513.1C556.14 513.1 560.56 513.1 563.73 513.1C567.06 512.56 571.27 509.78 574.57 509.57C577.77 509.36 582.15 511.15 585.42 511.69C588.65 512.21 593.15 513.1 596.26 513.1C599.65 512.55 603.85 508.16 607.1 508.16C610.36 508.16 614.55 512.55 617.95 513.1C621.06 513.1 625.54 511.69 628.79 511.69C632.04 511.69 636.43 513.1 639.63 513.1C642.94 512.83 647.16 510.46 650.48 509.92C653.66 509.4 658.15 509.1 661.32 509.57C664.65 510.06 668.83 512.56 672.16 513.1C675.33 513.1 679.77 513.1 683.01 513.1C686.27 512.89 690.59 511.79 693.85 511.69C697.09 511.58 701.44 512.18 704.69 512.39C707.95 512.61 712.31 513.1 715.54 513.1C718.82 512.89 723.1 511.3 726.38 510.98C729.6 510.67 734 510.67 737.22 510.98C740.51 511.3 744.78 512.78 748.07 513.1C751.29 513.1 755.66 513.1 758.91 513.1C762.16 513.1 766.53 513.1 769.76 513.1C773.04 512.78 777.32 511.14 780.6 510.98C783.83 510.82 788.19 511.72 791.44 512.04C794.7 512.36 799.04 513.1 802.29 513.1C805.54 513.07 809.88 511.83 813.13 511.83C816.38 511.83 820.71 512.91 823.97 513.1C827.21 513.1 831.56 513.1 834.82 513.1C838.07 513.1 842.41 513.1 845.66 513.1C848.91 513.1 853.25 513.1 856.5 513.1C859.76 513.1 864.09 513.1 867.35 513.1C870.6 513.06 874.94 512.82 878.19 512.82C881.44 512.82 885.78 513.06 889.03 513.1C892.29 513.1 896.62 513.1 899.88 513.1C903.13 513.1 907.49 513.1 910.72 513.1C914 512.83 918.31 511.33 921.56 511.33C924.82 511.33 929.23 513.1 932.41 513.1C935.74 512.77 939.9 509.69 943.25 509.21C946.41 508.76 950.87 509.57 954.1 509.99C957.37 510.42 961.78 512.37 964.94 512.04C968.28 511.69 972.55 507.68 975.78 507.73C979.05 507.78 983.27 512 986.63 512.39C989.77 512.76 994.24 510.17 997.47 510.27C1000.75 510.38 1005.01 512.67 1008.31 513.1C1011.51 513.1 1015.9 513.1 1019.16 513.1C1022.41 513.1 1026.75 513.1 1030 513.1L1030 513.1L108.3 513.1Z" fill="#4e73df" fill-opacity="0.05" stroke="none"/><path d="M108.3 509.43C111.55 510.53 116 513.1 119.14 513.1C122.51 512.78 126.73 507.38 129.99 507.38C133.24 507.38 137.38 512.19 140.83 513.1C143.88 513.1 148.49 513.1 151.67 513.1C154.99 512.61 159.2 510.46 162.52 509.92C165.7 509.4 170.14 509.31 173.36 509.57C176.64 509.84 180.93 511.15 184.2 511.69C187.44 512.21 191.78 512.89 195.05 513.1C198.29 513.1 202.64 513.1 205.89 513.1C209.14 513.1 213.49 513.1 216.74 513.1C220 512.94 224.33 512.41 227.58 512.04C230.84 511.67 235.16 511 238.42 510.63C241.67 510.26 246.04 509.41 249.27 509.57C252.54 509.73 256.84 511.15 260.11 511.69C263.35 512.21 267.69 512.89 270.95 513.1C274.19 513.1 278.56 513.1 281.8 513.1C285.07 512.83 289.37 511.44 292.64 511.33C295.88 511.23 300.32 512.81 303.48 512.39C306.83 511.96 311.11 508.4 314.33 508.51C317.62 508.62 321.88 512.99 325.17 513.1C328.39 513.1 332.76 509.21 336.01 509.21C339.27 509.21 343.51 512.5 346.86 513.1C350.01 513.1 354.45 513.1 357.7 513.1C360.95 513.1 365.29 513.1 368.54 513.1C371.8 513.1 376.19 513.1 379.39 513.1C382.69 512.67 386.97 511.07 390.23 510.27C393.47 509.48 397.81 507.86 401.08 507.8C404.32 507.75 408.7 509.14 411.92 509.92C415.21 510.72 419.44 512.61 422.76 513.1C425.95 513.1 430.37 513.1 433.61 513.1C436.88 512.83 441.2 511.33 444.45 511.33C447.7 511.33 452.02 512.83 455.29 513.1C458.52 513.1 462.92 513.1 466.14 513.1C469.43 512.72 473.71 510.73 476.98 510.63C480.21 510.52 484.56 512.34 487.82 512.39C491.07 512.45 495.41 511.4 498.67 510.98C501.92 510.56 506.33 509.26 509.51 509.57C512.83 509.89 517.07 512.99 520.35 513.1C523.58 513.1 527.94 510.27 531.2 510.27C534.45 510.27 538.73 512.67 542.04 513.1C545.24 513.1 549.63 513.1 552.88 513.1C556.14 513.1 560.56 513.1 563.73 513.1C567.06 512.56 571.27 509.78 574.57 509.57C577.77 509.36 582.15 511.15 585.42 511.69C588.65 512.21 593.15 513.1 596.26 513.1C599.65 512.55 603.85 508.16 607.1 508.16C610.36 508.16 614.55 512.55 617.95 513.1C621.06 513.1 625.54 511.69 628.79 511.69C632.04 511.69 636.43 513.1 639.63 513.1C642.94 512.83 647.16 510.46 650.48 509.92C653.66 509.4 658.15 509.1 661.32 509.57C664.65 510.06 668.83 512.56 672.16 513.1C675.33 513.1 679.77 513.1 683.01 513.1C686.27 512.89 690.59 511.79 693.85 511.69C697.09 511.58 701.44 512.18 704.69 512.39C707.95 512.61 712.31 513.1 715.54 513.1C718.82 512.89 723.1 511.3 726.38 510.98C729.6 510.67 734 510.67 737.22 510.98C740.51 511.3 744.78 512.78 748.07 513.1C751.29 513.1 755.66 513.1 758.91 513.1C762.16 513.1 766.53 513.1 769.76 513.1C773.04 512.78 777.32 511.14 780.6 510.98C783.83 510.82 788.19 511.72 791.44 512.04C794.7 512.36 799.04 513.1 802.29 513.1C805.54 513.07 809.88 511.83 813.13 511.83C816.38 511.83 820.71 512.91 823.97 513.1C827.21 513.1 831.56 513.1 834.82 513.1C838.07 513.1 842.41 513.1 845.66 513.1C848.91 513.1 853.25 513.1 856.5 513.1C859.76 513.1 864.09 513.1 867.35 513.1C870.6 513.06 874.94 512.82 878.19 512.82C881.44 512.82 885.78 513.06 889.03 513.1C892.29 513.1 896.62 513.1 899.88 513.1C903.13 513.1 907.49 513.1 910.72 513.1C914 512.83 918.31 511.33 921.56 511.33C924.82 511.33 929.23 513.1 932.41 513.1C935.74 512.77 939.9 509.69 943.25 509.21C946.41 508.76 950.87 509.57 954.1 509.99C957.37 510.42 961.78 512.37 964.94 512.04C968.28 511.69 972.55 507.68 975.78 507.73C979.05 507.78 983.27 512 986.63 512.39C989.77 512.76 994.24 510.17 997.47 510.27C1000.75 510.38 1005.01 512.67 1008.31 513.1C1011.51 513.1 1015.9 513.1 1019.16 513.1C1022.41 513.1 1026.75 513.1 1030 513.1" fill="none" stroke="#4e73df" stroke-width="2.7" stroke-linejoin="round"/><g fill="#4e73df" fill-opacity="0.05" stroke="#4e73df" stroke-width="1.0"><circle cx="108.3" cy="509.43" r="2.5"/><circle cx="119.14" cy="513.1" r="2.5"/><circle cx="129.99" cy="507.38" r="2.5"/><circle cx="140.83" cy="513.1" r="2.5"/><circle cx="151.67" cy="513.1" r="2.5"/><circle cx="162.52" cy="509.92" r="2.5"/><circle cx="173.36" cy="509.57" r="2.5"/><circle cx="184.2" cy="511.69" r="2.5"/><circle cx="195.05" cy="513.1" r="2.5"/><circle cx="205.89" cy="513.1" r="2.5"/><circle cx="216.74" cy="513.1" r="2.5"/><circle cx="227.58" cy="512.04" r="2.5"/><circle cx="238.42" cy="510.63" r="2.5"/><circle cx="249.27" cy="509.57" r="2.5"/><circle cx="260.11" cy="511.69" r="2.5"/><circle cx="270.95" cy="513.1" r="2.5"/><circle cx="281.8" cy="513.1" r="2.5"/><circle cx="292.64" cy="511.33" r="2.5"/><circle cx="303.48" cy="512.39" r="2.5"/><circle cx="314.33" cy="508.51" r="2.5"/><circle cx="325.17" cy="513.1" r="2.5"/><circle cx="336.01" cy="509.21" r="2.5"/><circle cx="346.86" cy="513.1" r="2.5"/><circle cx="357.7" cy="513.1" r="2.5"/><circle cx="368.54" cy="513.1" r="2.5"/><circle cx="379.39" cy="513.1" r="2.5"/><circle cx="390.23" cy="510.27" r="2.5"/><circle cx="401.08" cy="507.8" r="2.5"/><circle cx="411.92" cy="509.92" r="2.5"/><circle cx="422.76" cy="513.1" r="2.5"/><circle cx="433.61" cy="513.1" r="2.5"/><circle cx="444.45" cy="511.33" r="2.5"/><circle cx="455.29" cy="513.1" r="2.5"/><circle cx="466.14" cy="513.1" r="2.5"/><circle cx="476.98" cy="510.63" r="2.5"/><circle cx="487.82" cy="512.39" r="2.5"/><circle cx="498.67" cy="510.98" r="2.5"/><circle cx="509.51" cy="509.57" r="2.5"/><circle cx="520.35" cy="513.1" r="2.5"/><circle cx="531.2" cy="510.27" r="2.5"/><circle cx="542.04" cy="513.1" r="2.5"/><circle cx="552.88" cy="513.1" r="2.5"/><circle cx="563.73" cy="513.1" r="2.5"/><circle cx="574.57" cy="509.57" r="2.5"/><circle cx="585.42" cy="511.69" r="2.5"/><circle cx="596.26" cy="513.1" r="2.5"/><circle cx="607.1" cy="508.16" r="2.5"/><circle cx="617.95" cy="513.1" r="2.5"/><circle cx="628.79" cy="511.69" r="2.5"/><circle cx="639.63" cy="513.1" r="2.5"/><circle cx="650.48" cy="509.92" r="2.5"/><circle cx="661.32" cy="509.57" r="2.5"/><circle cx="672.16" cy="513.1" r="2.5"/><circle cx="683.01" cy="513.1" r="2.5"/><circle cx="693.85" cy="511.69" r="2.5"/><circle cx="704.69" cy="512.39" r="2.5"/><circle cx="715.54" cy="513.1" r="2.5"/><circle cx="726.38" cy="510.98" r="2.5"/><circle cx="737.22" cy="510.98" r="2.5"/><circle cx="748.07" cy="513.1" r="2.5"/><circle cx="758.91" cy="513.1" r="2.5"/><circle cx="769.76" cy="513.1" r="2.5"/><circle cx="780.6" cy="510.98" r="2.5"/><circle cx="791.44" cy="512.04" r="2.5"/><circle cx="802.29" cy="513.1" r="2.5"/><circle cx="813.13" cy="511.83" r="2.5"/><circle cx="823.97" cy="513.1" r="2.5"/><circle cx="834.82" cy="513.1" r="2.5"/><circle cx="845.66" cy="513.1" r="2.5"/><circle cx="856.5" cy="513.1" r="2.5"/><circle cx="867.35" cy="513.1" r="2.5"/><circle cx="878.19" cy="512.82" r="2.5"/><circle cx="889.03" cy="513.1" r="2.5"/><circle cx="899.88" cy="513.1" r="2.5"/><circle cx="910.72" cy="513.1" r="2.5"/><circle cx="921.56" cy="511.33" r="2.5"/><circle cx="932.41" cy="513.1" r="2.5"/><circle cx="943.25" cy="509.21" r="2.5"/><circle cx="954.1" cy="509.99" r="2.5"/><circle cx="964.94" cy="512.04" r="2.5"/><circle cx="975.78" cy="507.73" r="2.5"/><circle cx="986.63" cy="512.39" r="2.5"/><circle cx="997.47" cy="510.27" r="2.5"/><circle cx="1008.31" cy="513.1" r="2.5"/><circle cx="1019.16" cy="513.1" r="2.5"/><circle cx="1030" cy="513.1" r="2.5"/></g>
<path d="M108.3 362.99C111.55 408.02 113.07 471.09 119.14 513.1C119.58 513.1 126.73 513.1 129.99 513.1C133.24 513.1 137.58 513.1 140.83 513.1C144.08 513.1 148.42 513.1 151.67 513.1C154.93 513.1 161.81 513.1 162.52 513.1C168.31 489.7 170.11 425.51 173.36 425.51C176.61 425.51 180.94 512.97 184.2 513.1C187.44 513.1 191.8 426.35 195.05 426.35C198.3 426.35 200.1 489.95 205.89 513.1C206.61 513.1 215.58 513.1 216.74 513.1C222.09 500.94 224.33 463.86 227.58 463.86C230.83 463.86 233.07 500.94 238.42 513.1C239.57 513.1 247.48 513.1 249.27 513.1C253.99 507.32 257.48 494.72 260.11 486.54C263.98 474.52 268.47 442.73 270.95 445.78C274.97 450.7 276.18 495.68 281.8 513.1C282.69 513.1 289.39 513.1 292.64 513.1C295.89 513.1 300.23 513.1 303.48 513.1C306.74 513.1 311.07 513.1 314.33 513.1C317.58 513.1 321.92 513.1 325.17 513.1C328.42 513.1 332.76 513.1 336.01 513.1C339.27 513.1 343.6 513.1 346.86 513.1C350.11 513.1 356.18 513.1 357.7 513.1C362.68 505.34 365.23 489.44 368.54 479.33C371.74 469.59 375.39 449.49 379.39 446.91C381.89 445.3 388.25 459.31 390.23 465.35C394.76 479.17 395.75 501.37 401.08 513.1C402.25 513.1 408.67 513.1 411.92 513.1C415.17 513.1 419.51 513.1 422.76 513.1C426.02 513.1 431.73 513.1 433.61 513.1C438.23 507.9 441.2 488.73 444.45 488.73C447.7 488.73 452.61 513.1 455.29 513.1C459.12 510.96 461.63 481.47 466.14 476.58C468.14 474.41 474.41 485.25 476.98 489.58C480.91 496.2 483.24 508.13 487.82 513.1C489.74 513.1 495.41 513.1 498.67 513.1C501.92 513.1 506.26 513.1 509.51 513.1C512.76 513.1 519.72 513.1 520.35 513.1C526.23 486.1 527.94 413.36 531.2 413.36C534.45 413.36 536.17 486.1 542.04 513.1C542.68 513.1 549.63 513.1 552.88 513.1C556.14 513.1 560.48 513.1 563.73 513.1C566.98 513.1 573.48 513.1 574.57 513.1C579.99 499.96 582.16 460.47 585.42 460.47C588.67 460.47 594.16 513.1 596.26 513.1C600.67 500.97 603.85 400.78 607.1 400.78C610.36 400.78 612.01 482.36 617.95 513.1C618.52 513.1 625.54 513.1 628.79 513.1C632.04 513.1 636.38 513.1 639.63 513.1C642.89 513.1 647.22 513.1 650.48 513.1C653.73 513.1 658.07 513.1 661.32 513.1C664.57 513.1 671.22 513.1 672.16 513.1C677.73 496.88 679.75 449.88 683.01 449.88C686.26 449.88 688.29 496.88 693.85 513.1C694.79 513.1 701.44 513.1 704.69 513.1C707.95 513.1 712.28 513.1 715.54 513.1C718.79 513.1 723.13 513.1 726.38 513.1C729.63 513.1 733.97 513.1 737.22 513.1C740.48 513.1 744.82 513.1 748.07 513.1C751.32 513.1 755.66 513.1 758.91 513.1C762.16 513.1 768.59 513.1 769.76 513.1C775.09 501.19 777.35 464.71 780.6 464.71C783.85 464.71 786.1 501.19 791.44 513.1C792.61 513.1 799.03 513.1 802.29 513.1C805.54 513.1 809.88 513.1 813.13 513.1C816.38 513.1 820.72 513.1 823.97 513.1C827.23 513.1 831.56 513.1 834.82 513.1C838.07 513.1 842.41 513.1 845.66 513.1C848.91 513.1 853.25 513.1 856.5 513.1C859.76 513.1 866.66 513.1 867.35 513.1C873.17 488.61 874.94 421.83 878.19 421.83C881.44 421.83 883.21 488.61 889.03 513.1C889.72 513.1 896.62 513.1 899.88 513.1C903.13 513.1 909.83 513.1 910.72 513.1C916.34 495.55 918.31 445.36 921.56 445.36C924.82 445.36 928.32 507.69 932.41 513.1C934.82 513.1 938.13 483.66 943.25 474.04C944.64 471.43 951.21 471.44 954.1 472.34C957.72 473.47 962.98 482.77 964.94 480.82C969.49 476.28 973.6 447.47 975.78 450.72C980.1 457.16 982.51 507.91 986.63 513.1C989.01 513.1 992.46 485.76 997.47 478.06C998.97 475.76 1006.76 477.25 1008.31 479.76C1013.27 487.76 1014.47 507.66 1019.16 513.1C1020.97 513.1 1026.75 507.36 1030 504.91L1030 513.1L108.3 513.1Z" fill="#1cc88a" fill-opacity="0.05" stroke="none"/><path d="M108.3 362.99C111.55 408.02 113.07 471.09 119.14 513.1C119.58 513.1 126.73 513.1 129.99 513.1C133.24 513.1 137.58 513.1 140.83 513.1C144.08 513.1 148.42 513.1 151.67 513.1C154.93 513.1 161.81 513.1 162.52 513.1C168.31 489.7 170.11 425.51 173.36 425.51C176.61 425.51 180.94 512.97 184.2 513.1C187.44 513.1 191.8 426.35 195.05 426.35C198.3 426.35 200.1 489.95 205.89 513.1C206.61 513.1 215.58 513.1 216.74 513.1C222.09 500.94 224.33 463.86 227.58 463.86C230.83 463.86 233.07 500.94 238.42 513.1C239.57 513.1 247.48 513.1 249.27 513.1C253.99 507.32 257.48 494.72 260.11 486.54C263.98 474.52 268.47 442.73 270.95 445.78C274.97 450.7 276.18 495.68 281.8 513.1C282.69 513.1 289.39 513.1 292.64 513.1C295.89 513.1 300.23 513.1 303.48 513.1C306.74 513.1 311.07 513.1 314.33 513.1C317.58 513.1 321.92 513.1 325.17 513.1C328.42 513.1 332.76 513.1 336.01 513.1C339.27 513.1 343.6 513.1 346.86 513.1C350.11 513.1 356.18 513.1 357.7 513.1C362.68 505.34 365.23 489.44 368.54 479.33C371.74 469.59 375.39 449.49 379.39 446.91C381.89 445.3 388.25 459.31 390.23 465.35C394.76 479.17 395.75 501.37 401.08 513.1C402.25 513.1 408.67 513.1 411.92 513.1C415.17 513.1 419.51 513.1 422.76 513.1C426.02 513.1 431.73 513.1 433.61 513.1C438.23 507.9 441.2 488.73 444.45 488.73C447.7 488.73 452.61 513.1 455.29 513.1C459.12 510.96 461.63 481.47 466.14 476.58C468.14 474.41 474.41 485.25 476.98 489.58C480.91 496.2 483.24 508.13 487.82 513.1C489.74 513.1 495.41 513.1 498.67 513.1C501.92 513.1 506.26 513.1 509.51 513.1C512.76 513.1 519.72 513.1 520.35 513.1C526.23 486.1 527.94 413.36 531.2 413.36C534.45 413.36 536.17 486.1 542.04 513.1C542.68 513.1 549.63 513.1 552.88 513.1C556.14 513.1 560.48 513.1 563.73 513.1C566.98 513.1 573.48 513.1 574.57 513.1C579.99 499.96 582.16 460.47 585.42 460.47C588.67 460.47 594.16 513.1 596.26 513.1C600.67 500.97 603.85 400.78 607.1 400.78C610.36 400.78 612.01 482.36 617.95 513.1C618.52 513.1 625.54 513.1 628.79 513.1C632.04 513.1 636.38 513.1 639.63 513.1C642.89 513.1 647.22 513.1 650.48 513.1C653.73 513.1 658.07 513.1 661.32 513.1C664.57 513.1 671.22 513.1 672.16 513.1C677.73 496.88 679.75 449.88 683.01 449.88C686.26 449.88 688.29 496.88 693.85 513.1C694.79 513.1 701.44 513.1 704.69 513.1C707.95 513.1 712.28 513.1 715.54 513.1C718.79 513.1 723.13 513.1 726.38 513.1C729.63 513.1 733.97 513.1 737.22 513.1C740.48 513.1 744.82 513.1 748.07 513.1C751.32 513.1 755.66 513.1 758.91 513.1C762.16 513.1 768.59 513.1 769.76 513.1C775.09 501.19 777.35 464.71 780.6 464.71C783.85 464.71 786.1 501.19 791.44 513.1C792.61 513.1 799.03 513.1 802.29 513.1C805.54 513.1 809.88 513.1 813.13 513.1C816.38 513.1 820.72 513.1 823.97 513.1C827.23 513.1 831.56 513.1 834.82 513.1C838.07 513.1 842.41 513.1 845.66 513.1C848.91 513.1 853.25 513.1 856.5 513.1C859.76 513.1 866.66 513.1 867.35 513.1C873.17 488.61 874.94 421.83 878.19 421.83C881.44 421.83 883.21 488.61 889.03 513.1C889.72 513.1 896.62 513.1 899.88 513.1C903.13 513.1 909.83 513.1 910.72 513.1C916.34 495.55 918.31 445.36 921.56 445.36C924.82 445.36 928.32 507.69 932.41 513.1C934.82 513.1 938.13 483.66 943.25 474.04C944.64 471.43 951.21 471.44 954.1 472.34C957.72 473.47 962.98 482.77 964.94 480.82C969.49 476.28 973.6 447.47 975.78 450.72C980.1 457.16 982.51 507.91 986.63 513.1C989.01 513.1 992.46 485.76 997.47 478.06C998.97 475.76 1006.76 477.25 1008.31 479.76C1013.27 487.76 1014.47 507.66 1019.16 513.1C1020.97 513.1 1026.75 507.36 1030 504.91" fill="none" stroke="#1cc88a" stroke-width="2.7" stroke-linejoin="round"/><g fill="#1cc88a" fill-opacity="0.05" stroke="#1cc88a" stroke-width="1.0"><circle cx="108.3" cy="362.99" r="2.5"/><circle cx="119.14" cy="513.1" r="2.5"/><circle cx="129.99" cy="513.1" r="2.5"/><circle cx="140.83" cy="513.1" r="2.5"/><circle cx="151.67" cy="513.1" r="2.5"/><circle cx="162.52" cy="513.1" r="2.5"/><circle cx="173.36" cy="425.51" r="2.5"/><circle cx="184.2" cy="513.1" r="2.5"/><circle cx="195.05" cy="426.35" r="2.5"/><circle cx="205.89" cy="513.1" r="2.5"/><circle cx="216.74" cy="513.1" r="2.5"/><circle cx="227.58" cy="463.86" r="2.5"/><circle cx="238.42" cy="513.1" r="2.5"/><circle cx="249.27" cy="513.1" r="2.5"/><circle cx="260.11" cy="486.54" r="2.5"/><circle cx="270.95" cy="445.78" r="2.5"/><circle cx="281.8" cy="513.1" r="2.5"/><circle cx="292.64" cy="513.1" r="2.5"/><circle cx="303.48" cy="513.1" r="2.5"/><circle cx="314.33" cy="513.1" r="2.5"/><circle cx="325.17" cy="513.1" r="2.5"/><circle cx="336.01" cy="513.1" r="2.5"/><circle cx="346.86" cy="513.1" r="2.5"/><circle cx="357.7" cy="513.1" r="2.5"/><circle cx="368.54" cy="479.33" r="2.5"/><circle cx="379.39" cy="446.91" r="2.5"/><circle cx="390.23" cy="465.35" r="2.5"/><circle cx="401.08" cy="513.1" r="2.5"/><circle cx="411.92" cy="513.1" r="2.5"/><circle cx="422.76" cy="513.1" r="2.5"/><circle cx="433.61" cy="513.1" r="2.5"/><circle cx="444.45" cy="488.73" r="2.5"/><circle cx="455.29" cy="513.1" r="2.5"/><circle cx="466.14" cy="476.58" r="2.5"/><circle cx="476.98" cy="489.58" r="2.5"/><circle cx="487.82" cy="513.1" r="2.5"/><circle cx="498.67" cy="513.1" r="2.5"/><circle cx="509.51" cy="513.1" r="2.5"/><circle cx="520.35" cy="513.1" r="2.5"/><circle cx="531.2" cy="413.36" r="2.5"/><circle cx="542.04" cy="513.1" r="2.5"/><circle cx="552.88" cy="513.1" r="2.5"/><circle cx="563.73" cy="513.1" r="2.5"/><circle cx="574.57" cy="513.1" r="2.5"/><circle cx="585.42" cy="460.47" r="2.5"/><circle cx="596.26" cy="513.1" r="2.5"/><circle cx="607.1" cy="400.78" r="2.5"/><circle cx="617.95" cy="513.1" r="2.5"/><circle cx="628.79" cy="513.1" r="2.5"/><circle cx="639.63" cy="513.1" r="2.5"/><circle cx="650.48" cy="513.1" r="2.5"/><circle cx="661.32" cy="513.1" r="2.5"/><circle cx="672.16" cy="513.1" r="2.5"/><circle cx="683.01" cy="449.88" r="2.5"/><circle cx="693.85" cy="513.1" r="2.5"/><circle cx="704.69" cy="513.1" r="2.5"/><circle cx="715.54" cy="513.1" r="2.5"/><circle cx="726.38" cy="513.1" r="2.5"/><circle cx="737.22" cy="513.1" r="2.5"/><circle cx="748.07" cy="513.1" r="2.5"/><circle cx="758.91" cy="513.1" r="2.5"/><circle cx="769.76" cy="513.1" r="2.5"/><circle cx="780.6" cy="464.71" r="2.5"/><circle cx="791.44" cy="513.1" r="2.5"/><circle cx="802.29" cy="513.1" r="2.5"/><circle cx="813.13" cy="513.1" r="2.5"/><circle cx="823.97" cy="513.1" r="2.5"/><circle cx="834.82" cy="513.1" r="2.5"/><circle cx="845.66" cy="513.1" r="2.5"/><circle cx="856.5" cy="513.1" r="2.5"/><circle cx="867.35" cy="513.1" r="2.5"/><circle cx="878.19" cy="421.83" r="2.5"/><circle cx="889.03" cy="513.1" r="2.5"/><circle cx="899.88" cy="513.1" r="2.5"/><circle cx="910.72" cy="513.1" r="2.5"/><circle cx="921.56" cy="445.36" r="2.5"/><circle cx="932.41" cy="513.1" r="2.5"/><circle cx="943.25" cy="474.04" r="2.5"/><circle cx="954.1" cy="472.34" r="2.5"/><circle cx="964.94" cy="480.82" r="2.5"/><circle cx="975.78" cy="450.72" r="2.5"/><circle cx="986.63" cy="513.1" r="2.5"/><circle cx="997.47" cy="478.06" r="2.5"/><circle cx="1008.31" cy="479.76" r="2.5"/><circle cx="1019.16" cy="513.1" r="2.5"/><circle cx="1030" cy="504.91" r="2.5"/></g>
</g>
<rect x="421.2" y="318.9" width="32" height="9.6" fill="rgba(28,200,138,0.05)" stroke="#1cc88a" stroke-width="2.4"/>
<text x="458" y="326.2">Compras</text>
<rect x="504.94" y="318.9" width="32" height="9.6" fill="rgba(78,115,223,0.05)" stroke="#4e73df" stroke-width="2.4"/>
<text x="541.74" y="326.2">Consumo</text>
<rect x="590.83" y="318.9" width="32" height="9.6" fill="rgba(0,0,0,0.1)" stroke="#e74a3b" stroke-width="2.4" stroke-dasharray="4 4"/>
<text x="627.63" y="326.2">Mermas</text>
<path d="M1238.3 311.9A118.8 118.8 0 1 1 1223 548.51L1227.57 513.31A83.3 83.3 0 1 0 1238.3 347.4Z" fill="#4e73df" stroke="#fff" stroke-width="1.6" stroke-linejoin="round"/>
<path d="M1223 548.51A118.8 118.8 0 0 1 1238.3 311.9L1238.3 347.4A83.3 83.3 0 0 0 1227.57 513.31Z" fill="#1cc88a" stroke="#fff" stroke-width="1.6" stroke-linejoin="round"/>
<rect x="1405" y="417" width="32" height="9.6" fill="#4e73df" stroke="#fff" stroke-width="1.6"/>
<text x="1441.8" y="424.3">Bebidas</text>
<rect x="1405" y="434.6" width="32" height="9.6" fill="#1cc88a" stroke="#fff" stroke-width="1.6"/>
<text x="1441.8" y="441.9">Alimentos Perecederos</text>
<path d="M127 681.4V877.7M188.63 681.4V877.7M250.27 681.4V877.7M311.9 681.4V877.7M373.53 681.4V877.7M435.17 681.4V877.7M496.8 681.4V877.7M120.6 681.4H496.8M120.6 713.05H496.8M120.6 744.7H496.8M120.6 776.35H496.8M120.6 808H496.8M120.6 839.65H496.8M120.6 871.3H496.8" stroke="rgba(0,0,0,0.1)" stroke-width="0.8" fill="none"/>
<path d="M127 685.83H480.47Q484.47 685.83 484.47 689.83V704.62Q484.47 708.62 480.47 708.62H127Z" fill="#1cc88a"/>
<text x="118.2" y="699.73" text-anchor="end">Coca Cola Zero</text>
<path d="M127 717.48H278.69Q282.69 717.48 282.69 721.48V736.27Q282.69 740.27 278.69 740.27H127Z" fill="#1cc88a"/>
<text x="118.2" y="731.38" text-anchor="end">Trozos</text>
<path d="M127 749.13H261.86Q265.86 749.13 265.86 753.13V767.92Q265.86 771.92 261.86 771.92H127Z" fill="#1cc88a"/>
<text x="118.2" y="763.02" text-anchor="end">B&amp;P</text>
<path d="M127 780.78H245.03Q249.03 780.78 249.03 784.78V799.57Q249.03 803.57 245.03 803.57H127Z" fill="#1cc88a"/>
<text x="118.2" y="794.67" text-anchor="end">Sprite 500ml</text>
<path d="M127 812.43H244.05Q248.05 812.43 248.05 816.43V831.22Q248.05 835.22 244.05 835.22H127Z" fill="#1cc88a"/>
<text x="118.2" y="826.32" text-anchor="end">Porciones 50up</text>
<path d="M127 844.08H150Q154 844.08 154 848.08V862.87Q154 866.87 150 866.87H127Z" fill="#1cc88a"/>
<text x="118.2" y="857.97" text-anchor="end">Postre</text>
<text x="127" y="888.91" text-anchor="middle">$0</text>
<text x="188.63" y="888.91" text-anchor="middle">$100.000</text>
<text x="250.27" y="888.91" text-anchor="middle">$200.000</text>
<text x="311.9" y="888.91" text-anchor="middle">$300.000</text>
<text x="373.53" y="888.91" text-anchor="middle">$400.000</text>
<text x="435.17" y="888.91" text-anchor="middle">$500.000</text>
<text x="496.8" y="888.91" text-anchor="middle">$600.000</text>
<rect x="234.2" y="663.6" width="32" height="9.6" fill="#1cc88a"/>
<text x="271" y="670.9">Gasto Total ($)</text>
<circle cx="799" cy="797" r="18.4" fill="none" stroke="rgba(0,0,0,0.1)" stroke-width="0.8"/>
<circle cx="799" cy="797" r="36.8" fill="none" stroke="rgba(0,0,0,0.1)" stroke-width="0.8"/>
<circle cx="799" cy="797" r="55.2" fill="none" stroke="rgba(0,0,0,0.1)" stroke-width="0.8"/>
<circle cx="799" cy="797" r="73.6" fill="none" stroke="rgba(0,0,0,0.1)" stroke-width="0.8"/>
<circle cx="799" cy="797" r="92" fill="none" stroke="rgba(0,0,0,0.1)" stroke-width="0.8"/>
<rect x="782.72" y="772.2" width="32.56" height="12.8" fill="rgba(255,255,255,0.75)"/>
<text x="799" y="781.1" text-anchor="middle">10.000</text>
<rect x="782.72" y="753.8" width="32.56" height="12.8" fill="rgba(255,255,255,0.75)"/>
<text x="799" y="762.7" text-anchor="middle">20.000</text>
<rect x="782.72" y="735.4" width="32.56" height="12.8" fill="rgba(255,255,255,0.75)"/>
<text x="799" y="744.3" text-anchor="middle">30.000</text>
<rect x="782.72" y="717" width="32.56" height="12.8" fill="rgba(255,255,255,0.75)"/>
<text x="799" y="725.9" text-anchor="middle">40.000</text>
<rect x="782.72" y="698.6" width="32.56" height="12.8" fill="rgba(255,255,255,0.75)"/>
<text x="799" y="707.5" text-anchor="middle">50.000</text>
<path d="M799 705.92A91.08 91.08 0 0 1 877.88 751.46L799 797Z" fill="#e74a3b" fill-opacity="0.6" stroke="#fff" stroke-width="1.6" stroke-linejoin="round"/>
<path d="M851.59 766.64A60.72 60.72 0 0 1 851.59 827.36L799 797Z" fill="#f6c23e" fill-opacity="0.6" stroke="#fff" stroke-width="1.6" stroke-linejoin="round"/>
<path d="M811.27 804.08A14.17 14.17 0 0 1 799 811.17L799 797Z" fill="#36b9cc" fill-opacity="0.6" stroke="#fff" stroke-width="1.6" stroke-linejoin="round"/>
<path d="M799 800.5A3.5 3.5 0 0 1 795.97 798.75L799 797Z" fill="#1cc88a" fill-opacity="0.85" stroke="#fff" stroke-width="0.5" stroke-linejoin="round"/>
<path d="M794.86 799.39A4.78 4.78 0 0 1 794.86 794.61L799 797Z" fill="#e74a3b" fill-opacity="0.85" stroke="#fff" stroke-width="0.5" stroke-linejoin="round"/>
<path d="M796.45 795.53A2.94 2.94 0 0 1 799 794.06L799 797Z" fill="#f6c23e" fill-opacity="0.85" stroke="#fff" stroke-width="0.5" stroke-linejoin="round"/>
<rect x="573.29" y="663.6" width="32" height="9.6" fill="#e74a3b" fill-opacity="0.6" stroke="#fff" stroke-width="1.6"/>
<text x="610.09" y="670.9">Coca Cola Zero</text>
<rect x="685.32" y="663.6" width="32" height="9.6" fill="#f6c23e" fill-opacity="0.6" stroke="#fff" stroke-width="1.6"/>
<text x="722.12" y="670.9">Sprite 500ml</text>
<rect x="784.01" y="663.6" width="32" height="9.6" fill="#36b9cc" fill-opacity="0.6" stroke="#fff" stroke-width="1.6"/>
<text x="820.81" y="670.9">Porciones 50up</text>
<rect x="895.52" y="663.6" width="32" height="9.6" fill="#1cc88a" fill-opacity="0.6" stroke="#fff" stroke-width="1.6"/>
<text x="932.32" y="670.9">Trozos</text>
<rect x="969.3" y="663.6" width="32" height="9.6" fill="#e74a3b" fill-opacity="0.6" stroke="#fff" stroke-width="1.6"/>
<text x="1006.1" y="670.9">B&amp;P</text>
<rect x="767.03" y="681.2" width="32" height="9.6" fill="#f6c23e" fill-opacity="0.6" stroke="#fff" stroke-width="1.6"/>
<text x="803.83" y="688.5">Postre</text>
<path d="M1313.9 681.9A106 106 0 0 1 1360.03 883.33L1313.9 787.9Z" fill="#1cc88a" stroke="#fff" stroke-width="1.6" stroke-linejoin="round"/>
<path d="M1360.03 883.33A106 106 0 1 1 1313.9 681.9L1313.9 787.9Z" fill="#4e73df" stroke="#fff" stroke-width="1.6" stroke-linejoin="round"/>
<rect x="1173.21" y="663.6" width="32" height="9.6" fill="#e74a3b" stroke="#fff" stroke-width="1.6"/>
<text x="1210.01" y="670.9">Crítico</text>
<rect x="1245.75" y="663.6" width="32" height="9.6" fill="#f6c23e" stroke="#fff" stroke-width="1.6"/>
<text x="1282.55" y="670.9">Bajo</text>
<rect x="1309.76" y="663.6" width="32" height="9.6" fill="#1cc88a" stroke="#fff" stroke-width="1.6"/>
<text x="1346.56" y="670.9">Óptimo</text>
<rect x="1385.51" y="663.6" width="32" height="9.6" fill="#4e73df" stroke="#fff" stroke-width="1.6"/>
<text x="1422.31" y="670.9">Exceso</text>
</svg>
<div class="abs" style="left:1429.7px;top:863.8px;width:158.8px;height:40px;background:#ffd52b;border-radius:9px 9px 0 0"></div>
<span class="t" style="left:1442.30px;top:874px;font-size:12.51px;color:#1a1a1a;">En línea</span>
<div class="circ" style="left:1576px;top:860.5px;width:16px;height:16px;background:#c01818"></div>
<span class="t" style="left:1581.60px;top:864px;font-size:9.5px;color:#fff;">1</span>
<div class="abs" style="left:1594.8px;top:18px;width:3.4px;height:575px;border-radius:2px;background:#7c8082"></div>
<div class="abs" style="left:0;top:895.4px;width:1600px;height:2px;background:#1c1f2b"></div>
<div class="abs" style="left:635px;top:895.4px;width:62px;height:2px;background:#4f8fa3"></div>
</div></body></html>
